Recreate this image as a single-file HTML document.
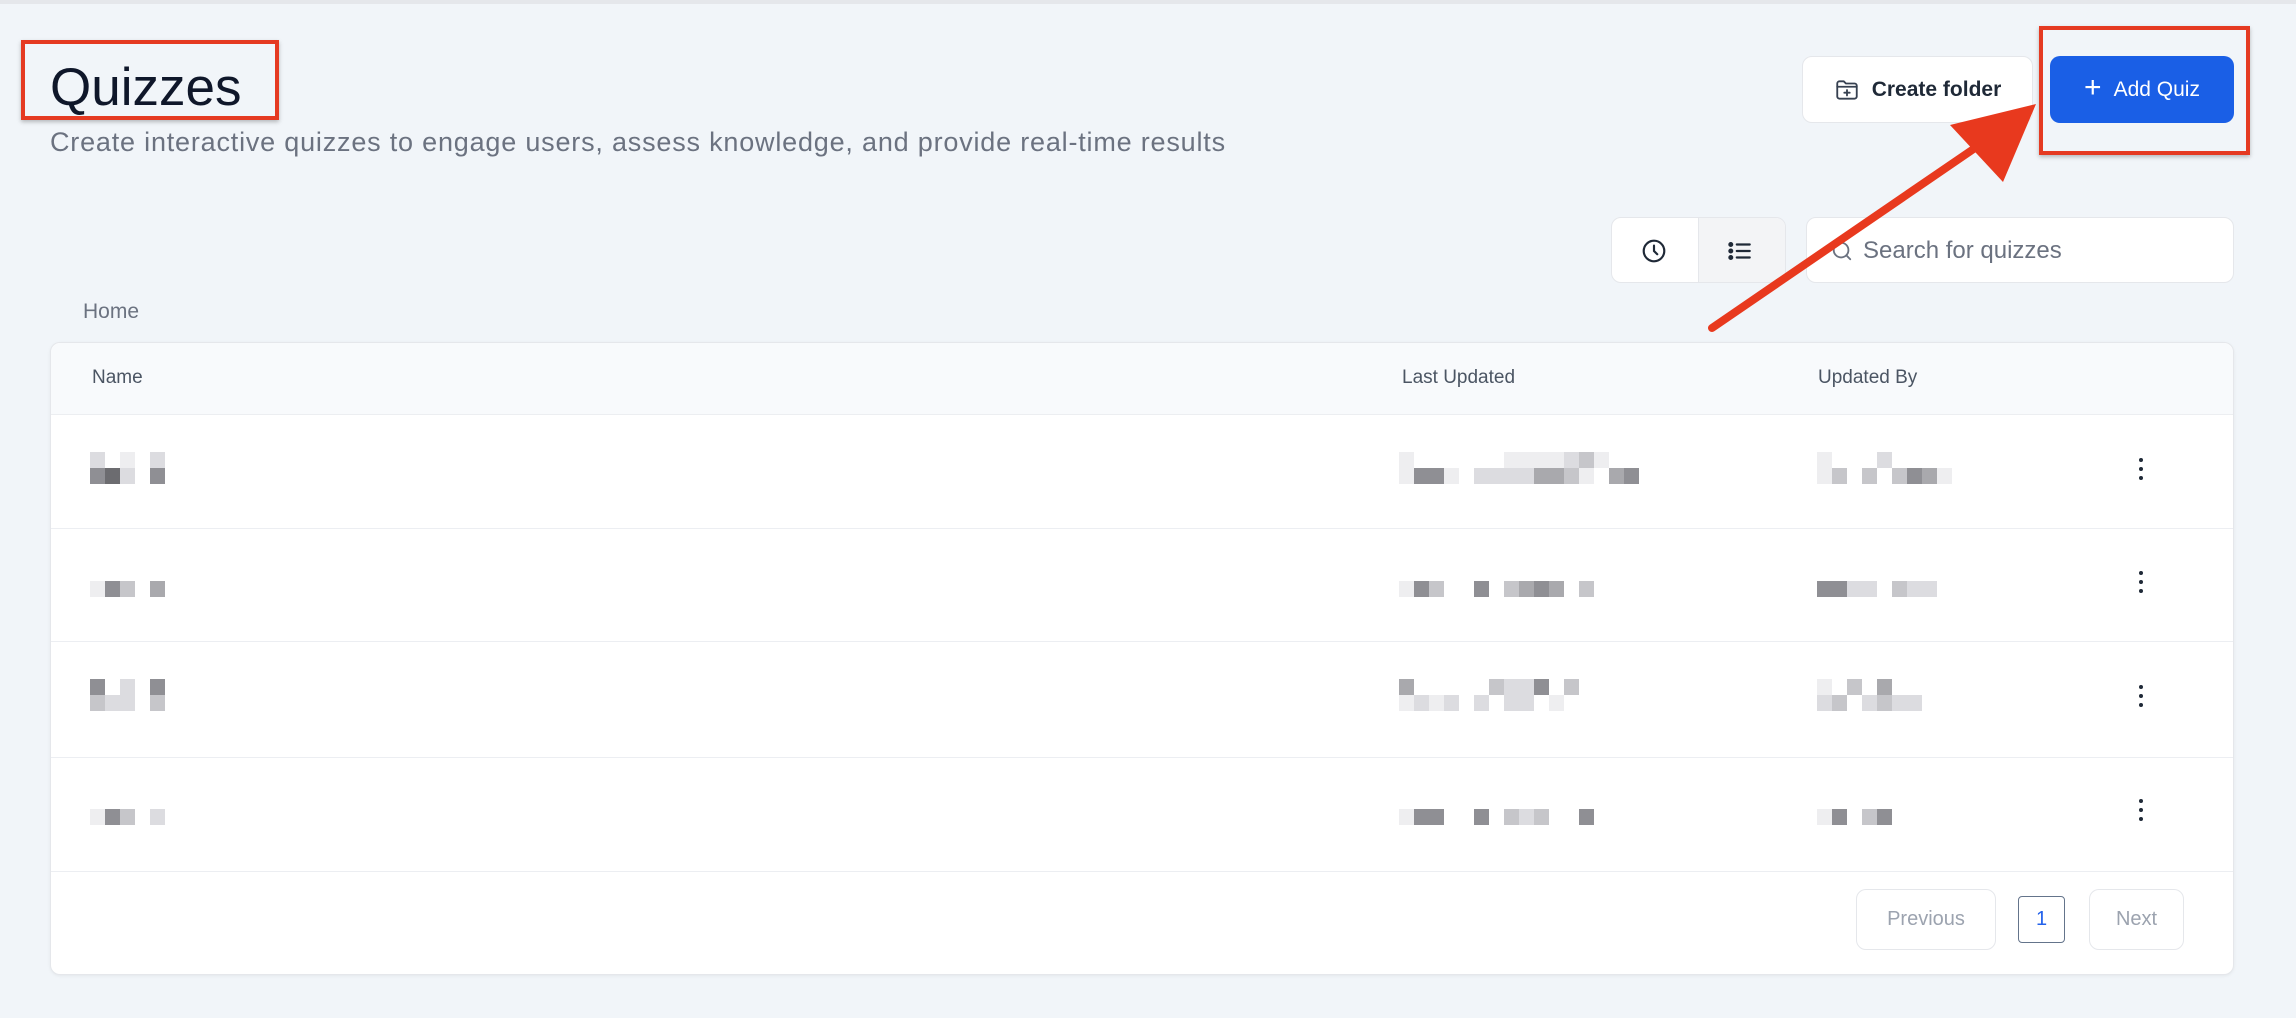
<!DOCTYPE html>
<html><head><meta charset="utf-8">
<style>
*{box-sizing:border-box;margin:0;padding:0}
body{width:2296px;height:1018px;background:#f1f5f9;font-family:"Liberation Sans",sans-serif;position:relative;overflow:hidden}
.top{position:absolute;left:0;top:0;width:2296px;height:4px;background:#e5e7eb}
.abs{position:absolute}
h1{position:absolute;left:50px;top:56px;font-size:53px;font-weight:400;color:#0f172a;line-height:64px}
.sub{position:absolute;left:50px;top:126px;font-size:27px;letter-spacing:0.8px;color:#6b7280;line-height:32px;white-space:nowrap}
.redbox{position:absolute;border:4px solid #e53a22;box-shadow:0 2px 4px rgba(0,0,0,.25)}
.btn{position:absolute;border-radius:10px;display:flex;align-items:center;justify-content:center;font-size:21px;font-weight:600}
.card{position:absolute;left:50px;top:342px;width:2184px;height:633px;background:#fff;border:1px solid #e5e7eb;border-radius:10px;box-shadow:0 1px 3px rgba(0,0,0,.06)}
.hdr{position:absolute;left:0;top:0;width:100%;height:72px;background:#f8fafc;border-bottom:1px solid #eceef1;border-radius:10px 10px 0 0}
.hdr span{position:absolute;top:24px;font-size:19px;color:#4b5563}
.sep{position:absolute;height:1px;background:#eceef2}
.kb{position:absolute;width:4px}
.kb i{display:block;width:4px;height:4px;border-radius:2px;background:#1f2937;margin-bottom:5px}
.pg{position:absolute;border:1px solid #e5e7eb;border-radius:10px;display:flex;align-items:center;justify-content:center;font-size:20px;color:#9ca3af}
.cell{position:absolute;width:15px;height:16px}
</style></head><body>
<div class="top"></div>
<h1>Quizzes</h1>
<div class="redbox" style="left:21px;top:40px;width:258px;height:80px"></div>
<div class="sub">Create interactive quizzes to engage users, assess knowledge, and provide real-time results</div>

<div class="btn" style="left:1802px;top:56px;width:231px;height:67px;background:#fff;border:1px solid #e5e7eb;color:#1f2937">
<svg width="26" height="26" viewBox="0 0 24 24" fill="none" stroke="#374151" stroke-width="1.7" stroke-linecap="round" stroke-linejoin="round" style="margin-right:12px"><path d="M3 6a2 2 0 0 1 2-2h4l2 2h8a2 2 0 0 1 2 2v10a2 2 0 0 1-2 2H5a2 2 0 0 1-2-2z"/><path d="M3 9h18"/><path d="M12 12v5M9.5 14.5h5"/></svg>Create folder</div>
<div class="btn" style="left:2050px;top:56px;width:184px;height:67px;background:#1a5fe6;color:#fff;font-weight:500">
<span style="font-size:30px;font-weight:300;margin-right:12px;margin-top:-3px">+</span>Add Quiz</div>
<div class="redbox" style="left:2039px;top:26px;width:211px;height:129px"></div>

<div class="abs" style="left:1611px;top:217px;width:175px;height:66px;border:1px solid #e5e7eb;border-radius:10px;background:#fff;overflow:hidden">
<div class="abs" style="left:86px;top:0;width:89px;height:66px;background:#f3f4f6;border-left:1px solid #e5e7eb"></div>
<svg class="abs" style="left:29px;top:20px" width="26" height="26" viewBox="0 0 24 24" fill="none" stroke="#1f2937" stroke-width="2" stroke-linecap="round"><circle cx="12" cy="12" r="9.5"/><path d="M12 7v5l3 3"/></svg>
<svg class="abs" style="left:115px;top:20px" width="26" height="26" viewBox="0 0 24 24" fill="none" stroke="#1f2937" stroke-width="2" stroke-linecap="round"><path d="M9 6h12M9 12h12M9 18h12"/><circle cx="3.5" cy="6" r="1.3" fill="#1f2937"/><circle cx="3.5" cy="12" r="1.3" fill="#1f2937"/><circle cx="3.5" cy="18" r="1.3" fill="#1f2937"/></svg>
</div>
<div class="abs" style="left:1806px;top:217px;width:428px;height:66px;border:1px solid #e5e7eb;border-radius:10px;background:#fff">
<svg class="abs" style="left:24px;top:22px" width="22" height="22" viewBox="0 0 24 24" fill="none" stroke="#6b7280" stroke-width="2" stroke-linecap="round"><circle cx="11" cy="11" r="8"/><path d="M17 17l4 4"/></svg>
<span class="abs" style="left:56px;top:19px;font-size:24px;color:#6b7280">Search for quizzes</span>
</div>

<div class="abs" style="left:83px;top:300px;font-size:21px;color:#6b7280">Home</div>

<div class="card">
<div class="hdr"><span style="left:41px">Name</span><span style="left:1351px">Last Updated</span><span style="left:1767px">Updated By</span></div>
<div class="sep" style="left:0;top:185px;width:100%"></div>
<div class="sep" style="left:0;top:298px;width:100%"></div>
<div class="sep" style="left:0;top:414px;width:100%"></div>
<div class="sep" style="left:0;top:528px;width:100%"></div>
<div class="kb" style="left:2088px;top:115px"><i></i><i></i><i></i></div>
<div class="kb" style="left:2088px;top:228px"><i></i><i></i><i></i></div>
<div class="kb" style="left:2088px;top:342px"><i></i><i></i><i></i></div>
<div class="kb" style="left:2088px;top:456px"><i></i><i></i><i></i></div>
<div class="pg" style="left:1805px;top:546px;width:140px;height:61px">Previous</div>
<div class="pg" style="left:1967px;top:553px;width:47px;height:47px;border:1.5px solid #64748b;border-radius:4px;color:#2563eb">1</div>
<div class="pg" style="left:2038px;top:546px;width:95px;height:61px">Next</div>
</div>
<div id="blur"></div>

<svg class="abs" style="left:0;top:0" width="2296" height="1018">
<line x1="1712" y1="328" x2="1975" y2="148" stroke="#e8391e" stroke-width="8" stroke-linecap="round"/>
<polygon points="2036,104 1950,125 2003,182" fill="#e8391e"/>
</svg>

<script>
var g={'1':'#eeeef0','2':'#dcdce0','3':'#c6c6ca','4':'#a9a9ad','5':'#8f8f94','6':'#6c6c70'};
var items=[
[90,470,"2.1.2","562.5"],[1399,470,"1......1111231","1551.22224431.45"],[1817,470,"1...2.....","13.3.3541."],
[90,583,".....","153.4"],[1399,583,"...................","153..5.3454.3"],[1817,583,"...........","5522.322"],
[90,697,"5.2.5","322.3"],[1399,697,"4.....3225.3","1212.2.22.1"],[1817,697,"1.3.4...","23.2322"],
[90,811,".....","153.2"],[1399,811,"............","155..5.323..5"],[1817,811,"..........","15.35"]];
var h='';
items.forEach(function(it){
 [it[2],it[3]].forEach(function(row,r){
  for(var i=0;i<row.length;i++){var c=row[i];if(g[c])h+='<div class="cell" style="left:'+(it[0]+i*15)+'px;top:'+(it[1]-18+r*16)+'px;background:'+g[c]+'"></div>';}
 });
});
document.getElementById('blur').innerHTML=h;
</script>
</body></html>
